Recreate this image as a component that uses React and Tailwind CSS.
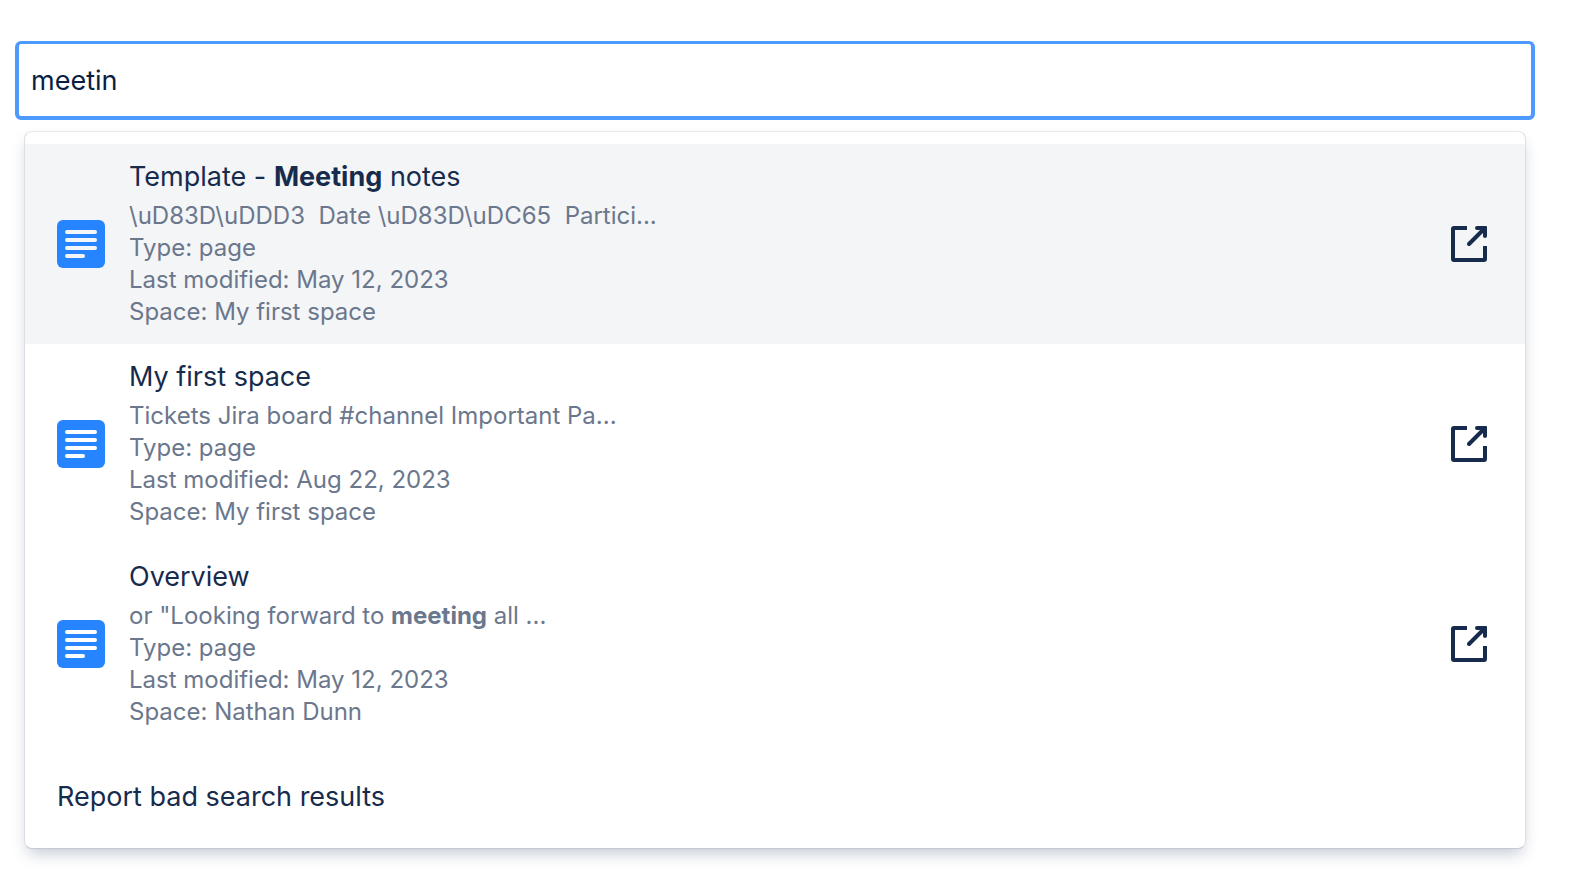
import React, { useState } from 'react';

const RESULTS = [
  {
    id: 1,
    title: ['Template - ', 'Meeting', ' notes'],
    snippet: ['\\uD83D\\uDDD3  Date \\uD83D\\uDC65  Partici...'],
    modified: 'May 12, 2023',
    space: 'My first space',
  },
  {
    id: 2,
    title: ['My first space'],
    snippet: ['Tickets Jira board #channel Important Pa...'],
    modified: 'Aug 22, 2023',
    space: 'My first space',
  },
  {
    id: 3,
    title: ['Overview'],
    snippet: ['or "Looking forward to ', 'meeting', ' all ...'],
    modified: 'May 12, 2023',
    space: 'Nathan Dunn',
  },
];

// Odd parts are the ones that matched the query
const Highlighted = ({ parts }) =>
  parts.map((part, i) => (i % 2 ? <b key={i} className="font-bold">{part}</b> : <span key={i}>{part}</span>));

const PageIcon = () => (
  <svg width="48" height="48" viewBox="0 0 48 48" className="shrink-0" aria-hidden="true">
    <rect width="48" height="48" rx="6" fill="#2684FF" />
    <g fill="currentColor">
      <rect x="8" y="10" width="32" height="4" rx="2" />
      <rect x="8" y="18" width="32" height="4" rx="2" />
      <rect x="8" y="26" width="32" height="4" rx="2" />
      <rect x="8" y="34" width="20" height="4" rx="2" />
    </g>
  </svg>
);

const OpenIcon = () => (
  <svg width="48" height="48" viewBox="0 0 48 48" fill="none" stroke="currentColor" strokeWidth="4" aria-hidden="true">
    <path d="M22 8H9a1 1 0 0 0-1 1v30a1 1 0 0 0 1 1h30a1 1 0 0 0 1-1V26" />
    <path d="M24 24 38 10" strokeLinecap="round" />
    <path d="M32 6h9a1 1 0 0 1 1 1v9a2 2 0 0 1-4 0v-3l-3-3h-3a2 2 0 0 1 0-4Z" fill="currentColor" stroke="none" />
  </svg>
);

const ResultRow = ({ result, active, onHover }) => (
  <li
    onMouseEnter={onHover}
    className={`flex items-center gap-6 px-8 py-4 ${active ? 'bg-[#f4f5f7]' : 'bg-white'}`}
  >
    <span className={active ? 'text-[#f4f5f7]' : 'text-white'}>
      <PageIcon />
    </span>
    <div className="min-w-0 flex-1">
      <p className="mb-1.5 text-[27px] leading-[34px] whitespace-pre">
        <Highlighted parts={result.title} />
      </p>
      <div className="text-[24px] leading-8 text-[#6b778c]">
        <p className="whitespace-pre">
          <Highlighted parts={result.snippet} />
        </p>
        <p>Type: page</p>
        <p>Last modified: {result.modified}</p>
        <p>Space: {result.space}</p>
      </div>
    </div>
    <button type="button" aria-label="Open in new tab" className="shrink-0">
      <OpenIcon />
    </button>
  </li>
);

export default function App() {
  const [query, setQuery] = useState('meetin');
  const [activeId, setActiveId] = useState(1);

  return (
    <main className="min-h-screen bg-white pt-[41px] pr-[43px] pb-9 pl-[15px] font-['Inter',sans-serif] text-[#172b4d]">
      <input
        type="text"
        aria-label="Search pages"
        value={query}
        onChange={(e) => setQuery(e.target.value)}
        className="block h-[79px] w-full rounded-md border-4 border-t-3 border-[#4c9aff] px-3 text-[27px] text-[#091e42] outline-none"
      />
      <div className="mx-[9px] mt-[11px] overflow-hidden rounded-lg border border-[#dcdee3] border-t-[#e6e8eb] border-b-[#c5c9d2] bg-white pt-3 shadow-[0_8px_16px_-4px_rgba(9,30,66,0.25)]">
        <ul>
          {RESULTS.map((result) => (
            <ResultRow
              key={result.id}
              result={result}
              active={result.id === activeId}
              onHover={() => setActiveId(result.id)}
            />
          ))}
        </ul>
        <button type="button" className="block w-full px-8 pt-9 pb-[34px] text-left text-[27px] leading-[34px]">
          Report bad search results
        </button>
      </div>
    </main>
  );
}
